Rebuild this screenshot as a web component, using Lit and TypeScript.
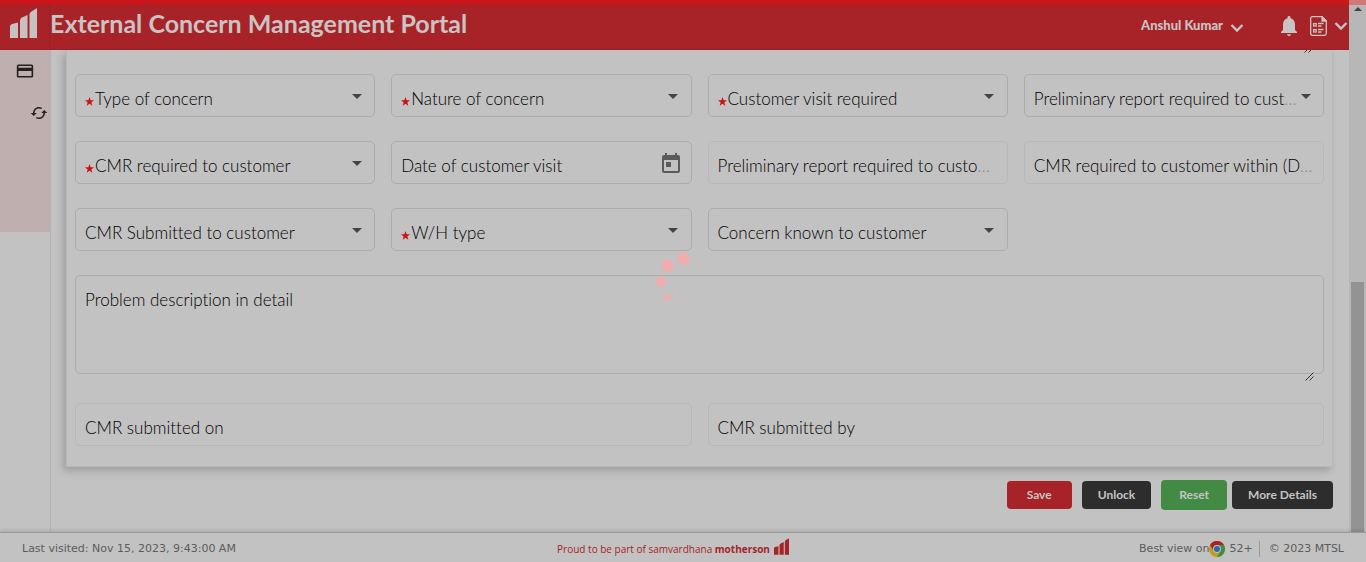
import { LitElement, html, css, svg, nothing } from "lit";
import { customElement, property } from "lit/decorators.js";

type Kind = "select" | "date" | "readonly";

interface FieldSpec {
  id: string;
  label: string;
  kind: Kind;
  required?: boolean;
}

const FIELDS: FieldSpec[] = [
  { id: "type", label: "Type of concern", kind: "select", required: true },
  { id: "nature", label: "Nature of concern", kind: "select", required: true },
  { id: "visit", label: "Customer visit required", kind: "select", required: true },
  { id: "prelim", label: "Preliminary report required to customer", kind: "select" },
  { id: "cmr", label: "CMR required to customer", kind: "select", required: true },
  { id: "visit-date", label: "Date of customer visit", kind: "date" },
  { id: "prelim-days", label: "Preliminary report required to customer within (Days)", kind: "readonly" },
  { id: "cmr-days", label: "CMR required to customer within (Days)", kind: "readonly" },
  { id: "submitted", label: "CMR Submitted to customer", kind: "select" },
  { id: "wh", label: "W/H type", kind: "select", required: true },
  { id: "known", label: "Concern known to customer", kind: "select" },
];

const SUBMISSION: FieldSpec[] = [
  { id: "submitted-on", label: "CMR submitted on", kind: "readonly" },
  { id: "submitted-by", label: "CMR submitted by", kind: "readonly" },
];

const bars = svg`<path d="M0 18.500Q0 16.500 2 16L8 14.500V30H0z"/><path d="M10 12.500Q10 10.500 12 9.500L17.500 7V30H10z"/><path d="M19.500 6.500Q19.500 4.500 21.500 3.500L27 0V30H19.500z"/>`;
const chevron = html`<svg width="14" height="10" viewBox="0 0 14 10" fill="none" stroke="currentColor" stroke-width="2.400"><path d="M1.500 2L7 7.500L12.500 2"/></svg>`;
const grip = html`<svg class="grip" width="9" height="9" viewBox="0 0 9 9" stroke="#333" fill="none"><path d="M.5 8.500L8.500.5M4.500 8.500L8.500 4.500"/></svg>`;

@customElement("form-field")
class FormField extends LitElement {
  @property({ attribute: false }) spec!: FieldSpec;

  static styles = css`
    :host { display: block; min-width: 0; }
    .field {
      display: grid;
      grid-template-columns: minmax(0, 1fr) auto;
      height: 43px;
      box-sizing: border-box;
      border: 1px solid #adadad;
      border-radius: 5px;
    }
    .readonly { border-color: #b8b8b8; }
    label {
      grid-area: 1 / 1;
      padding: 8px 0 0 9px;
      font-size: 17px;
      font-weight: 300;
      line-height: 32px;
      color: #8a8a8a;
      white-space: nowrap;
      overflow: hidden;
      text-overflow: ellipsis;
    }
    .text { color: #000; }
    .star { width: 9px; height: 9px; margin-right: 1px; vertical-align: -1px; }
    .control {
      grid-area: 1 / 1 / 2 / 3;
      width: 100%;
      min-width: 0;
      margin: 0;
      padding: 0 9px;
      border: 0;
      outline: 0;
      background: transparent;
      font: inherit;
      appearance: none;
    }
    .end {
      grid-area: 1 / 2;
      width: 9px;
      box-sizing: border-box;
      display: flex;
      align-items: center;
      justify-content: center;
      pointer-events: none;
    }
    .select .end { width: 26px; padding: 2px 9px 0 0; }
    .date .end { width: 40px; padding-top: 2px; }
  `;

  render() {
    const { id, label, kind, required } = this.spec;
    return html`<div class="field ${kind}">
      <label for=${id}>${required
        ? html`<svg class="star" viewBox="0 0 10 10" fill="#cb1417"><path d="M5 0L6.300 3.500L10 3.700L7.100 6L8.100 9.700L5 7.600L1.900 9.700L2.900 6L0 3.700L3.700 3.500z"/></svg>`
        : nothing}<span class="text">${label}</span></label>
      ${kind === "select"
        ? html`<select class="control" id=${id}><option></option></select>`
        : html`<input class="control" id=${id} type="text" ?disabled=${kind === "readonly"} />`}
      <span class="end">${kind === "select"
        ? html`<svg width="10" height="5" viewBox="0 0 10 5" fill="#444"><path d="M0 0H10L5 5z"/></svg>`
        : kind === "date"
          ? html`<svg width="24" height="24" viewBox="0 0 24 24" fill="#5b5b5b"><path d="M19 3h-1V1h-2v2H8V1H6v2H5c-1.110 0-1.990.9-1.990 2L3 19c0 1.100.89 2 2 2h14c1.100 0 2-.9 2-2V5c0-1.100-.9-2-2-2zm0 16H5V8h14v11zM7 10h5v5H7z"/></svg>`
          : nothing}</span>
    </div>`;
  }
}

@customElement("app-root")
class AppRoot extends LitElement {
  static styles = css`
    :host {
      display: flex;
      flex-direction: column;
      height: 100vh;
      overflow: hidden;
      background: #c2c2c2;
      font-family: Lato, "Open Sans", sans-serif;
      font-variant-ligatures: none;
      position: relative;
    }
    .progress { position: absolute; inset: 0 0 auto 0; height: 5px; background: #c8161a; z-index: 3; display: flex; justify-content: flex-end; }
    .progress-end { width: 17px; background: #d27878; }
    .upper { flex: 1; min-height: 0; display: flex; }
    .page { flex: 1; min-width: 0; display: flex; flex-direction: column; }
    header {
      height: 50px;
      box-sizing: border-box;
      display: flex;
      align-items: center;
      padding-right: 1px;
      background: #a72328;
      border-bottom: 1px solid #9c2226;
      color: #c8c4c4;
    }
    .brand { width: 50px; height: 49px; box-sizing: border-box; padding: 8px 0 0 10px; border-right: 1px solid #9b2024; }
    h1 { flex: 1; margin: 0; padding-bottom: 3px; font-size: 25px; line-height: 32px; font-weight: 700; white-space: nowrap; }
    .user, .icon-button { border: 0; padding: 0; background: none; color: inherit; font: inherit; display: flex; align-items: center; }
    .user { gap: 7px; margin-right: 37px; font-size: 13px; line-height: 18px; font-weight: 900; }
    .user svg { padding-top: 6px; }
    .icon-button { padding-top: 3px; }
    .reports { margin-left: 13px; }
    .more { margin-left: 7px; }
    .body { flex: 1; min-height: 0; display: flex; }
    nav { width: 50px; border-right: 1px solid #b3b3b3; }
    .menu { height: 182px; background: #bfafae; display: flex; flex-direction: column; }
    .menu a { display: flex; color: #222; }
    .menu .cards { padding: 12px 0 0 16px; }
    .menu .sync { padding: 24px 0 0 30px; }
    main { flex: 1; min-width: 0; padding: 0 16px 0 15px; }
    .card {
      padding: 0 8px 20px;
      border: 1px solid #b8b8b8;
      border-top: 0;
      box-shadow: -3px 4px 7px rgba(0, 0, 0, 0.18);
    }
    .previous { height: 24px; display: flex; justify-content: flex-end; padding-right: 11px; overflow: hidden; }
    .previous svg { margin-top: -6px; }
    .fields { display: grid; grid-template-columns: repeat(4, minmax(0, 1fr)); gap: 24px 16px; }
    .pair { display: grid; grid-template-columns: repeat(2, minmax(0, 1fr)); gap: 16px; }
    .description {
      display: grid;
      height: 99px;
      box-sizing: border-box;
      margin: 24px 0 29px;
      border: 1px solid #adadad;
      border-radius: 5px;
      position: relative;
    }
    .description label, .description textarea { grid-area: 1 / 1; }
    .description label { padding: 8px 9px 0; font-size: 17px; font-weight: 300; line-height: 32px; color: #000; }
    .description textarea { border: 0; margin: 0; padding: 16px 9px; resize: none; outline: 0; background: transparent; font: inherit; }
    .description .grip { position: absolute; right: 9px; bottom: -8px; }
    .actions { display: flex; justify-content: flex-end; align-items: center; margin-top: 13px; }
    .btn {
      height: 28px;
      padding: 0 16px;
      border: 0;
      border-radius: 4px;
      background: #2d2d2d;
      color: #c4c4c4;
      font: 700 12px/28px Lato, sans-serif;
    }
    .save { background: #a72328; padding: 0 20px; margin-right: 10px; }
    .unlock { margin-right: 10px; }
    .reset { background: #438b44; height: 30px; padding: 0 18px; margin-right: 5px; }
    .scrollbar { width: 17px; background: #b7b7b7; display: flex; flex-direction: column; align-items: center; justify-content: space-between; }
    .scrollbar svg { margin-top: 7px; }
    .thumb { width: 13px; height: 47%; background: #939393; }
    footer {
      height: 30px;
      box-sizing: border-box;
      border-top: 1px solid #999;
      box-shadow: 0 -1px 4px rgba(0, 0, 0, 0.15);
      display: grid;
      grid-template-columns: 1fr auto 1fr;
      align-items: center;
      padding: 2px 22px 0;
      font: 11px/16px "DejaVu Sans", sans-serif;
      color: #5c5c5c;
      z-index: 1;
    }
    .group { display: flex; align-items: flex-end; gap: 4px; padding: 0 20px 4px 0; color: #a72328; font: 10px/11px "Open Sans", sans-serif; }
    .browser { display: flex; justify-content: flex-end; align-items: center; }
    .browser .version { padding: 0 6px 0 4px; }
    .browser .owner { border-left: 1px solid #999; padding-left: 9px; }
    .spinner { position: absolute; left: 50%; top: 50%; margin: -30px 0 0 -30px; z-index: 2; }
  `;

  render() {
    return html`
      <div class="progress"><span class="progress-end"></span></div>
      <div class="upper">
        <div class="page">
          <header>
            <div class="brand"><svg width="27" height="30" viewBox="0 0 27 30" fill="#c6c2c2">${bars}</svg></div>
            <h1>External Concern Management Portal</h1>
            <button class="user" type="button">Anshul Kumar ${chevron}</button>
            <button class="icon-button" type="button" aria-label="Notifications">
              <svg width="16" height="20" viewBox="0 0 16 20" fill="currentColor"><path d="M8 20c1.100 0 2-.8 2-1.800H6C6 19.200 6.900 20 8 20zM14 14V8.500c0-3-1.600-5.500-4.500-6.200V1.500C9.500.7 8.800 0 8 0S6.500.7 6.500 1.500v.8C3.600 3 2 5.500 2 8.500V14l-2 2v1h16v-1z"/></svg>
            </button>
            <button class="icon-button reports" type="button" aria-label="Reports">
              <svg width="17" height="20" viewBox="0 0 17 20" fill="none" stroke="currentColor" stroke-width="1.300"><path d="M2.500.7H12L16.300 5V17.500Q16.300 19.300 14.500 19.300H2.500Q.7 19.300.7 17.500V2.500Q.7.7 2.500.7z"/><path d="M12 .7V5H16.300z" fill="currentColor"/><rect x="3.600" y="7.600" width="2.600" height="2.400"/><rect x="3.600" y="13.600" width="2.600" height="2.400"/><path d="M8 7.500H13.500M8 10H11.500M8 13.500H13.500M8 16H11.500"/></svg>
            </button>
            <button class="icon-button more" type="button" aria-label="More">${chevron}</button>
          </header>
          <div class="body">
            <nav>
              <div class="menu">
                <a class="cards" href="#cards" aria-label="Concerns"><svg width="18" height="18" viewBox="1 1 22 22" fill="currentColor"><path d="M20 4H4c-1.110 0-1.990.89-1.990 2L2 18c0 1.110.89 2 2 2h16c1.110 0 2-.89 2-2V6c0-1.110-.89-2-2-2zm0 14H4v-6h16v6zm0-10H4V6h16v2z"/></svg></a>
                <a class="sync" href="#sync" aria-label="Refresh"><svg width="18" height="18" viewBox="0 0 24 24" fill="currentColor"><path d="M19 8l-4 4h3c0 3.310-2.690 6-6 6-1.010 0-1.970-.25-2.800-.7l-1.460 1.460C8.970 19.540 10.430 20 12 20c4.420 0 8-3.580 8-8h3l-4-4zM6 12c0-3.310 2.690-6 6-6 1.010 0 1.970.25 2.800.7l1.460-1.460C15.030 4.460 13.570 4 12 4c-4.420 0-8 3.580-8 8H1l4 4 4-4H6z"/></svg></a>
              </div>
            </nav>
            <main>
              <section class="card">
                <div class="previous">${grip}</div>
                <div class="fields">${FIELDS.map((f) => html`<form-field .spec=${f}></form-field>`)}</div>
                <div class="description">
                  <label for="description">Problem description in detail</label>
                  <textarea id="description"></textarea>
                  ${grip}
                </div>
                <div class="pair">${SUBMISSION.map((f) => html`<form-field .spec=${f}></form-field>`)}</div>
              </section>
              <div class="actions">
                <button class="btn save" type="button">Save</button>
                <button class="btn unlock" type="button">Unlock</button>
                <button class="btn reset" type="button">Reset</button>
                <button class="btn" type="button">More Details</button>
              </div>
            </main>
          </div>
        </div>
        <div class="scrollbar">
          <svg width="8" height="4" viewBox="0 0 8 4" fill="#444"><path d="M4 0L8 4H0z"/></svg>
          <span class="thumb"></span>
        </div>
      </div>
      <footer>
        <span>Last visited: Nov 15, 2023, 9:43:00 AM</span>
        <span class="group"><span>Proud to be part of samvardhana <b>motherson</b></span><svg width="15" height="17" viewBox="0 0 27 30" fill="currentColor">${bars}</svg></span>
        <span class="browser">Best view on<svg width="16" height="16" viewBox="0 0 16 16"><circle cx="8" cy="8" r="8" fill="#bfa015"/><path d="M1.070 4A8 8 0 0 1 14.930 4H8L4.540 10z" fill="#a72328"/><path d="M14.930 4A8 8 0 0 1 8 16L11.460 10L8 4z" fill="#438b44"/><circle cx="8" cy="8" r="4" fill="#c2c2c2"/><circle cx="8" cy="8" r="3" fill="#2f67ad"/></svg><span class="version">52+</span><span class="owner">© 2023 MTSL</span></span>
      </footer>
      <svg class="spinner" width="60" height="60" viewBox="0 0 60 60" fill="#efadaf" role="status" aria-label="Loading"><circle cx="30.500" cy="7.500" r="6.500"/><circle cx="14.500" cy="14.500" r="6.200"/><circle cx="7.500" cy="30.500" r="5.300"/><circle cx="14.500" cy="46.500" r="3.800" opacity=".85"/><circle cx="30.500" cy="52.500" r="2" opacity=".5"/><circle cx="46.500" cy="14.500" r="1.200" opacity=".4"/></svg>
    `;
  }
}
